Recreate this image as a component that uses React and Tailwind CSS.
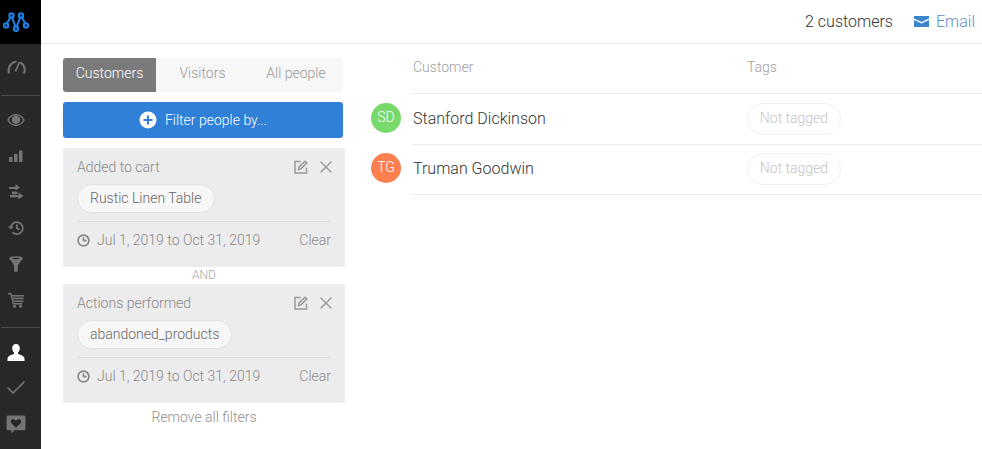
import { X, Check } from "lucide-react";

function NavIcon({ children, active }) {
  return (
    <div className={"h-9 pr-[9px] flex items-center justify-center " + (active ? "text-white" : "text-[#747474]")}>
      {children}
    </div>
  );
}

function Logo() {
  return (
    <svg width="26" height="20" viewBox="0 0 26 20" fill="none" stroke="#1b82ea" strokeWidth="2">
      <path d="M3 13 L8.500 3.500 L13 16.500 L18 3.500 L23 13" />
      <circle cx="3" cy="13.500" r="2.200" fill="#0a2744" />
      <circle cx="8.500" cy="3.500" r="2.200" fill="#0a2744" />
      <circle cx="13" cy="16.800" r="2.200" fill="#0a2744" />
      <circle cx="18" cy="3.500" r="2.200" fill="#0a2744" />
      <circle cx="23" cy="13.500" r="2.200" fill="#0a2744" />
    </svg>
  );
}

function Sidebar() {
  return (
    <div className="w-[41px] shrink-0 bg-[#282828] flex flex-col">
      <div className="h-[44px] bg-black pr-[9px] flex items-center justify-center">
        <Logo />
      </div>
      <div className="mt-[5px]">
        <NavIcon>
          <svg width="19" height="14" viewBox="0 0 19 14" fill="none" stroke="currentColor" strokeWidth="2.200">
            <path d="M2 13.500C.8 9.500 2 3 9.500 1.500" />
            <path d="M13.500 2.500C17 4.500 18.500 9 17 13.500" />
            <path d="M12.500 2 8.500 11.500" strokeWidth="1.800" />
          </svg>
        </NavIcon>
      </div>
      <div className="h-px bg-[#4a4a4a] mx-px mt-[10px] mb-[6px]" />
      <NavIcon>
        <svg width="18" height="14" viewBox="0 0 18 14" fill="currentColor">
          <path fillRule="evenodd" d="M9 1C5 1 1.800 3.500.3 7 1.800 10.500 5 13 9 13s7.200-2.500 8.700-6C16.200 3.500 13 1 9 1zm0 1.200c3 0 5.700 1.900 7.100 4.800-1.400 2.900-4.100 4.800-7.100 4.800S3.300 9.900 1.900 7C3.300 4.100 6 2.200 9 2.200z" />
          <circle cx="9" cy="6.800" r="4.200" />
        </svg>
      </NavIcon>
      <NavIcon>
        <svg width="14" height="12" viewBox="0 0 14 12" fill="currentColor">
          <rect x="0" y="7" width="3.500" height="5" />
          <rect x="5" y="4" width="3.500" height="8" />
          <rect x="10" y="0.500" width="3.500" height="11.500" />
        </svg>
      </NavIcon>
      <NavIcon>
        <svg width="15" height="16" viewBox="0 0 15 16" fill="currentColor">
          <path d="M0 3h6.500V0l4.500 3.800-4.500 2.700V5H0z" />
          <path d="M3 7.500h4.500L9 9l-1.500 1.200H3z" />
          <path d="M1 11h8.500V8.500l5 3.500-5 3.500V13.200H1z" />
        </svg>
      </NavIcon>
      <NavIcon>
        <svg width="17" height="16" viewBox="0 0 17 16" fill="none" stroke="currentColor" strokeWidth="1.800">
          <path d="M2.800 8a6 6 0 1 1 1.800 4.400" />
          <path d="M9 4.500V8.300l2.500 1.500" />
          <path d="M0 6.500 2.800 9.500 5.500 6.500" fill="currentColor" stroke="none" />
        </svg>
      </NavIcon>
      <NavIcon>
        <svg width="14" height="16" viewBox="0 0 14 16" fill="currentColor">
          <path fillRule="evenodd" d="M7 .2C3.200.2.200 1 .2 2.500c0 .7.500 1.200 1.300 1.600L5 9.500v6.200h3.800V9.500L12.500 4.100c.8-.4 1.300-.9 1.300-1.600C13.800 1 10.800.2 7 .2zM3 2.500c.8-.4 2.200-.7 4-.7s3.200.3 4 .7c-.8.400-2.200.7-4 .7s-3.200-.3-4-.7z" />
        </svg>
      </NavIcon>
      <NavIcon>
        <svg width="16" height="15" viewBox="0 0 16 15" fill="currentColor">
          <path d="M0 0h3.500l.6 2H16v1.500H4.500L6 10h8.500v1.500H4.800L2.500 1.500H0z" />
          <path d="M5 4.500h10.500v1.800H5.300z" />
          <rect x="6" y="7.500" width="9.500" height="1.500" />
          <circle cx="6.500" cy="13.300" r="1.500" />
          <circle cx="12.500" cy="13.300" r="1.500" />
        </svg>
      </NavIcon>
      <div className="h-px bg-[#4a4a4a] mx-px mt-[9px] mb-[6px]" />
      <NavIcon active>
        <svg width="18" height="17" viewBox="0 0 18 17" fill="currentColor">
          <path d="M9 0C6.500 0 5.200 1.800 5.200 4.200c0 1.800.8 3.300 1.800 4.300v1.500c-2.500.8-6.200 2-6.500 4.500V17h17v-2.500c-.3-2.500-4-3.700-6.500-4.500V8.500c1-1 1.800-2.500 1.800-4.300C12.800 1.800 11.500 0 9 0z" />
        </svg>
      </NavIcon>
      <NavIcon>
        <Check size={24} strokeWidth={1.700} />
      </NavIcon>
      <NavIcon>
        <svg width="20" height="19" viewBox="0 0 19 18" fill="currentColor">
          <path fillRule="evenodd" d="M2 .5h15A1.500 1.500 0 0 1 18.500 2v11a1.500 1.500 0 0 1-1.500 1.500H8L5 17.500v-3H2A1.500 1.500 0 0 1 .5 13V2A1.500 1.500 0 0 1 2 .5zM9.500 12 14 7.500c1-1.200.4-3.500-1.700-3.500-1.300 0-2.200.8-2.800 1.700C8.900 4.800 8 4 6.700 4 4.600 4 4 6.300 5 7.500z" />
        </svg>
      </NavIcon>
    </div>
  );
}

function FilterCard({ title, tag }) {
  return (
    <div className="h-[119px] bg-[#ececec] rounded-[3px] px-[14px] pt-[10px] text-[14px] text-[#8a8a8a]">
      <div className="flex items-center justify-between h-[18px]">
        <span>{title}</span>
        <div className="flex items-center gap-[8px] -mr-[5px]">
          <svg width="14" height="14" viewBox="0 0 14 14" fill="none" stroke="#999" strokeWidth="1.500">
            <path d="M6.500 1.500H1v11.500h11.500V7.500" />
            <path d="M4.500 9.500l.6-2.500L11 1.200l1.800 1.800L7 8.900z" />
          </svg>
          <X size={20} strokeWidth={1.600} className="text-[#999]" />
        </div>
      </div>
      <div className="mt-[8px] inline-flex h-[29px] items-center rounded-full border border-[#e2e2e2] bg-[#f7f7f7] px-3 text-[#666]">
        {tag}
      </div>
      <div className="mt-[8px] h-px bg-[#dcdcdc]" />
      <div className="mt-[8px] flex items-center justify-between">
        <div className="flex items-center gap-[7px]">
          <svg width="13" height="13" viewBox="0 0 13 13" fill="none" stroke="#888" strokeWidth="1.700">
            <circle cx="6.500" cy="6.500" r="5.400" />
            <path d="M6.500 3.200v3.500h3" />
          </svg>
          <span>Jul 1, 2019 to Oct 31, 2019</span>
        </div>
        <span>Clear</span>
      </div>
    </div>
  );
}

function Filters() {
  return (
    <div className="w-[282px] shrink-0 pt-[14px]">
      <div className="w-[280px] h-[34px] flex rounded-[3px] bg-[#f7f7f7] text-[14px] text-[#999]">
        <div className="w-[93px] pb-[3px] bg-[#7a7a7a] text-white rounded-l-[3px] flex items-center justify-center">Customers</div>
        <div className="w-[93px] pb-[3px] flex items-center justify-center">Visitors</div>
        <div className="flex-1 pb-[3px] flex items-center justify-center">All people</div>
      </div>
      <div className="mt-[10px] w-[280px] h-9 bg-[#2f80d6] rounded-[3px] flex items-center justify-center gap-[8px] text-white text-[14px]">
        <svg width="18" height="18" viewBox="0 0 18 18">
          <circle cx="9" cy="9" r="8.500" fill="#fff" />
          <path d="M9 4.500v9M4.500 9h9" stroke="#2f80d6" strokeWidth="2" />
        </svg>
        <span className="pt-px">Filter people by...</span>
      </div>
      <div className="mt-[10px]">
        <FilterCard title="Added to cart" tag="Rustic Linen Table" />
      </div>
      <div className="h-[17px] pb-[2px] flex items-center justify-center text-[12px] text-[#a5a5a5]">AND</div>
      <FilterCard title="Actions performed" tag="abandoned_products" />
      <div className="mt-[4px] text-center text-[14px] text-[#8f8f8f]">Remove all filters</div>
    </div>
  );
}

function Row({ initials, color, name, height, top, nudge }) {
  return (
    <div className={"relative border-b border-[#ebebeb] flex items-center " + height + " " + nudge}>
      <div className={"absolute -left-[41px] w-[30px] h-[30px] pb-px rounded-full text-white text-[14px] flex items-center justify-center " + top + " " + color}>
        {initials}
      </div>
      <div className="w-[335px] pl-px text-[16px] text-[#333]">{name}</div>
      <div className="h-[32px] w-[94px] pb-px rounded-full border border-[#f0f0f0] flex items-center justify-center text-[14px] text-[#c4c4c4]">
        Not tagged
      </div>
    </div>
  );
}

export default function App() {
  return (
    <div className="w-[982px] h-[449px] flex overflow-hidden bg-white font-['Roboto',sans-serif] font-light">
      <Sidebar />
      <div className="flex-1 flex flex-col min-w-0">
        <div className="h-[44px] shrink-0 border-b border-[#e8e8e8] flex items-center justify-end pr-[7px] text-[16px]">
          <span className="text-[#333]">2 customers</span>
          <svg className="ml-[21px]" width="15" height="11" viewBox="0 0 15 11" fill="#3c84cc">
            <path d="M0 0h15v2.500L7.500 6 0 2.500z" />
            <path d="M0 4l7.500 3.500L15 4v7H0z" />
          </svg>
          <span className="ml-[7px] text-[#5a8fc7]">Email</span>
        </div>
        <div className="flex-1 flex pl-[22px]">
          <Filters />
          <div className="flex-1 ml-[67px]">
            <div className="h-[50px] pb-[3px] border-b border-[#ebebeb] flex items-center text-[14px] text-[#a0a0a0]">
              <div className="w-[335px] pl-px">Customer</div>
              <div>Tags</div>
            </div>
            <Row initials="SD" color="bg-[#77d96a]" name="Stanford Dickinson" height="h-[51px]" top="top-[9px]" nudge="" />
            <Row initials="TG" color="bg-[#fb7f4f]" name="Truman Goodwin" height="h-[50px]" top="top-[8px]" nudge="pb-px" />
          </div>
        </div>
      </div>
    </div>
  );
}
